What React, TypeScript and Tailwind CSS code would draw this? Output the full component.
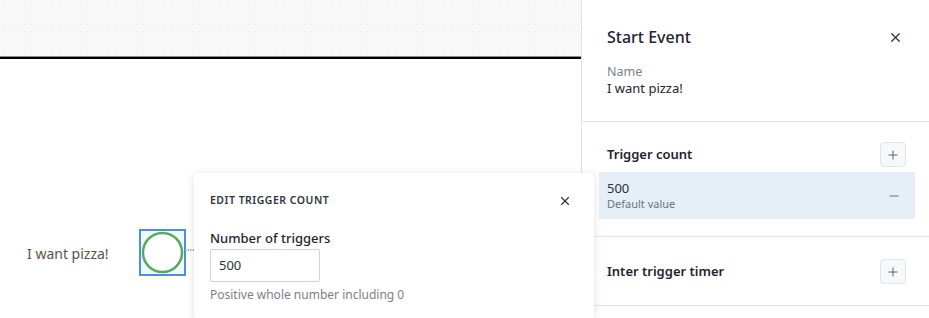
import { X, Plus, Minus } from 'lucide-react';

function PanelSection({ title, children, spacing }: { title: string; children?: React.ReactNode; spacing: string }) {
  return (
    <div className={`border-b border-[#e4e4e4] ${spacing}`}>
      <div className="flex items-center justify-between pl-[25px] pr-[23px]">
        <span className="text-[13px] font-semibold text-[#1f2430]">{title}</span>
        <button className="flex h-[25px] w-[26px] items-center justify-center rounded-[4px] border border-[#e2e4e8] bg-[#f7f8f9] text-[#555b66]">
          <Plus className="h-[14px] w-[14px]" strokeWidth={1.6} />
        </button>
      </div>
      {children}
    </div>
  );
}

export default function App() {
  return (
    <div
      className="relative flex h-[318px] w-[929px] overflow-hidden bg-white text-[#1f2430]"
      style={{ fontFamily: '"Noto Sans", "Open Sans", sans-serif' }}
    >
      {/* canvas */}
      <div className="relative flex-1">
        <div className="h-[56px] bg-[#f8f8f8] bg-[radial-gradient(#e6e6e6_0.6px,transparent_0.8px)] bg-[length:7px_7px]" />
        <div className="h-px bg-[#8a8a8a]" />
        <div className="h-[2px] bg-black" />

        <span className="absolute left-[27px] top-[243px] text-[14px] text-[#5b5246]">I want pizza!</span>

        {/* node */}
        <div className="absolute left-[139px] top-[229px] h-[47px] w-[47px]">
          <svg width="60" height="47" viewBox="0 0 60 47">
            <rect x="1" y="1" width="45" height="45" fill="#f2f8fd" stroke="#4a90dd" strokeWidth="2" />
            <circle cx="23.5" cy="23.5" r="19.5" fill="#fff" stroke="#52ac5a" strokeWidth="2.5" />
            <line x1="46" y1="21" x2="56" y2="21" stroke="#9a9a9a" strokeWidth="1.5" strokeDasharray="1.5 1" />
          </svg>
        </div>
      </div>

      {/* properties panel */}
      <div className="w-[348px] shrink-0 border-l border-[#e2e2e2] bg-white">
        <div className="flex items-center justify-between pl-[25px] pr-[26px] pt-[25px]">
          <span className="text-[16px] font-medium text-[#1f2430]">Start Event</span>
          <X className="h-[15px] w-[15px] text-[#2b3140]" strokeWidth={2} />
        </div>
        <div className="border-b border-[#e4e4e4] pl-[25px] pt-[15px] pb-[25px] leading-[16px]">
          <div className="text-[12.5px] text-[#7a808a]">Name</div>
          <div className="text-[13px] text-[#1f2430]">I want pizza!</div>
        </div>

        <PanelSection title="Trigger count" spacing="pt-[20px] pb-[17px]">
          <div className="mt-[5px] ml-[17px] mr-[14px] flex h-[47px] items-center justify-between bg-[#e6eef8] pl-[8px] pr-[14px]">
            <div className="leading-[16px]">
              <div className="text-[13px] text-[#2b3140]">500</div>
              <div className="text-[11px] text-[#6c7480]">Default value</div>
            </div>
            <Minus className="h-[14px] w-[14px] text-[#6a6f78]" strokeWidth={2} />
          </div>
        </PanelSection>

        <PanelSection title="Inter trigger timer" spacing="pt-[22px] pb-[21px]" />
      </div>

      {/* popover */}
      <div className="absolute left-[194px] top-[173px] z-10 w-[400px] rounded-[5px] bg-white px-[16px] pt-[20px] pb-[16px] shadow-[0_1px_8px_rgba(0,0,0,0.12)]">
        <div className="flex items-center justify-between">
          <span className="text-[10.5px] font-semibold tracking-[0.5px] text-[#2e3440]">EDIT TRIGGER COUNT</span>
          <X className="mr-[6px] h-[14px] w-[14px] text-[#2b3140]" strokeWidth={2} />
        </div>
        <div className="mt-[20px] text-[13px] font-medium text-[#1f2430]">Number of triggers</div>
        <div className="mt-[1px] flex h-[33px] w-[110px] items-center rounded-[2px] border border-[#cfd3d8] px-[8px] text-[13px] text-[#2b3140]">
          500
        </div>
        <div className="mt-[4px] text-[12px] text-[#7a808a]">Positive whole number including 0</div>
      </div>
    </div>
  );
}
